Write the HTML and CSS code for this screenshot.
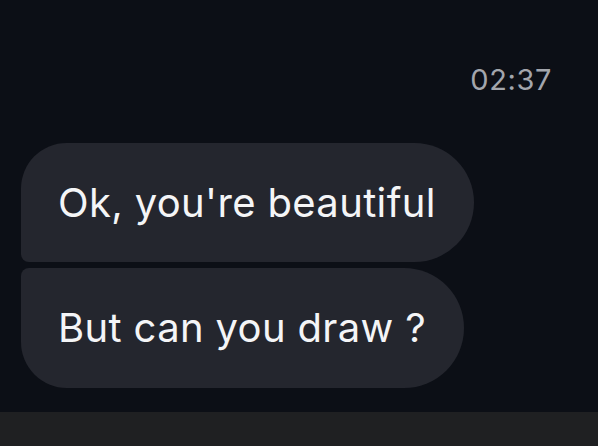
FILE: index.html
```html
<!DOCTYPE html>
<html lang="en">
<head>
  <meta charset="UTF-8">
  <meta name="viewport" content="width=device-width, initial-scale=1.0">
  <title>Chat</title>
  <link rel="stylesheet" href="styles.css">
</head>
<body>
  <div class="chat">
    <div class="time">02:37</div>

    <!-- incoming messages -->
    <div class="group">
      <div class="bubble first">Ok, you're beautiful</div>
      <div class="bubble last">But can you draw ?</div>
    </div>
  </div>
  <div class="composer"></div>
</body>
</html>
```

FILE: styles.css
```css
body { margin: 0; background: #0c0f16; font-family: Inter, "Noto Sans", sans-serif; height: 446px; display: flex; flex-direction: column; overflow: hidden; }
.chat { flex: 1; padding: 0 46px 0 21px; }
.time { text-align: right; color: #a3a6ad; font-size: 29px; margin-top: 61px; line-height: 38px; letter-spacing: 0.6px; }
.group { display: flex; flex-direction: column; align-items: flex-start; gap: 6px; margin-top: 44px; }
.bubble { background: #24262e; color: #f4f5f7; font-size: 40px; height: 120px; line-height: 120px; padding: 0 38px 0 37px; box-sizing: border-box; border-radius: 60px; letter-spacing: 0.35px; }
.bubble.first { border-radius: 46px 60px 60px 8px; height: 119px; line-height: 119px; }
.bubble.last { border-radius: 8px 60px 60px 46px; }
.composer { height: 34px; background: #1f2022; }
```
